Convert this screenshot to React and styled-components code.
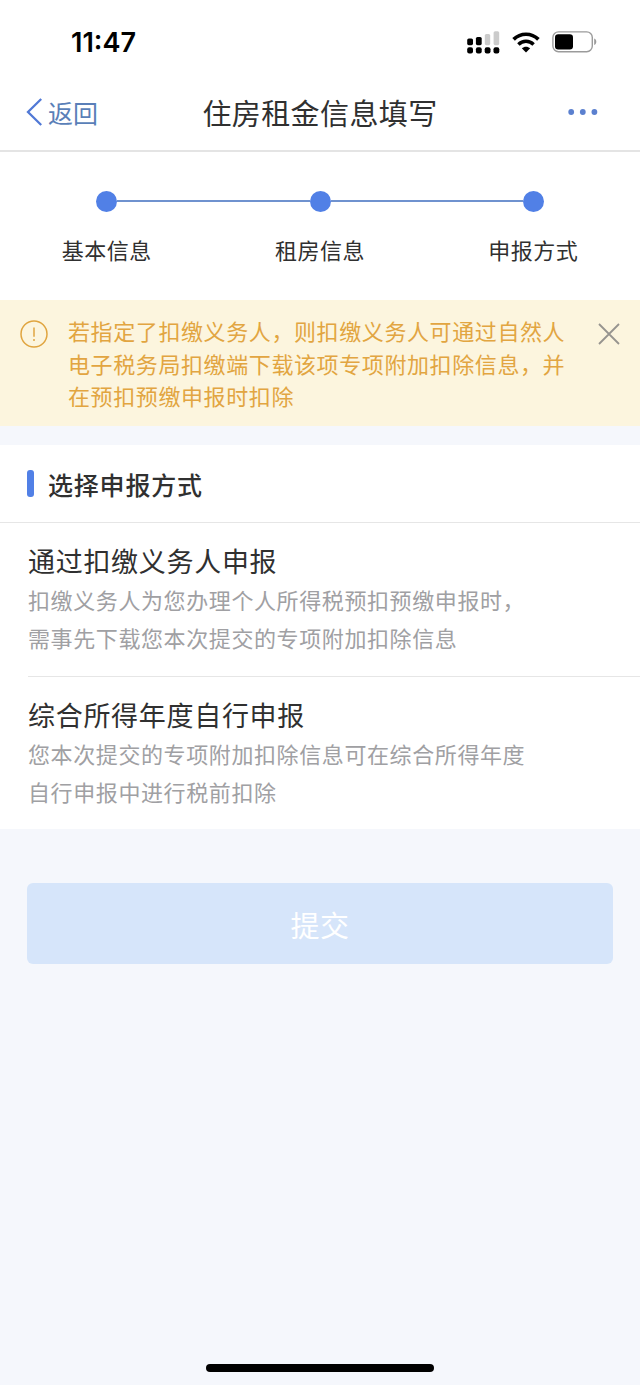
import React from 'react';
import styled, { createGlobalStyle } from 'styled-components';

const steps = ['基本信息', '租房信息', '申报方式'];

const options = [
    {
        title: '通过扣缴义务人申报',
        lines: ['扣缴义务人为您办理个人所得税预扣预缴申报时，', '需事先下载您本次提交的专项附加扣除信息']
    },
    {
        title: '综合所得年度自行申报',
        lines: ['您本次提交的专项附加扣除信息可在综合所得年度', '自行申报中进行税前扣除']
    }
];

const notice = ['若指定了扣缴义务人，则扣缴义务人可通过自然人', '电子税务局扣缴端下载该项专项附加扣除信息，并', '在预扣预缴申报时扣除'];

const SignalIcon = () => (
    <svg width="33" height="24" viewBox="0 0 33 24">
        <rect x="0.2" y="8.4" width="5.8" height="6.8" rx="1.6" fill="#000" />
        <rect x="8.9" y="7" width="5.8" height="8.2" rx="1.6" fill="#000" />
        <rect x="17.8" y="4" width="5.4" height="11.2" rx="1.6" fill="#cbcbcb" />
        <rect x="26.6" y="1.2" width="5.6" height="14" rx="1.6" fill="#cbcbcb" />
        <rect x="0.2" y="17.2" width="5.8" height="6.4" rx="2" fill="#000" />
        <rect x="8.9" y="17.2" width="5.8" height="6.4" rx="2" fill="#000" />
        <rect x="17.7" y="17.2" width="5.8" height="6.4" rx="2" fill="#000" />
        <rect x="26.5" y="17.2" width="5.8" height="6.4" rx="2" fill="#000" />
    </svg>
);

const WifiIcon = () => (
    <svg width="28" height="21" viewBox="0 0 28 21">
        <path d="M1.6 7.4C8.6 0.5 19.4 0.5 26.4 7.4" fill="none" stroke="#000" strokeWidth="3.7" />
        <path d="M6.4 12.4C10.7 8.3 17.3 8.3 21.6 12.4" fill="none" stroke="#000" strokeWidth="3.5" />
        <path d="M14 20.6L9.8 16.3C12.2 14.2 15.8 14.2 18.2 16.3Z" fill="#000" />
    </svg>
);

const BatteryIcon = () => (
    <svg width="45" height="22" viewBox="0 0 45 22">
        <rect x="0.9" y="0.9" width="39.4" height="19.8" rx="5.6" fill="none" stroke="#9b9b9b" strokeWidth="1.4" />
        <rect x="3" y="3.2" width="18" height="15.2" rx="3.2" fill="#000" />
        <path d="M42.2 7.6C45 8.4 45 13.2 42.2 14Z" fill="#9b9b9b" />
    </svg>
);

const BackIcon = () => (
    <svg width="17" height="28" viewBox="0 0 17 28">
        <path d="M15.2 1L2 14L15.2 27" fill="none" stroke="#5179d6" strokeWidth="2.3" />
    </svg>
);

const MoreIcon = () => (
    <svg width="30" height="8" viewBox="0 0 30 8">
        <circle cx="3.2" cy="4" r="2.9" fill="#5b80cf" />
        <circle cx="14.8" cy="4" r="2.9" fill="#5b80cf" />
        <circle cx="26.4" cy="4" r="2.9" fill="#5b80cf" />
    </svg>
);

const WarnIcon = () => (
    <svg width="28" height="28" viewBox="0 0 28 28">
        <circle cx="14" cy="14" r="13" fill="none" stroke="#e0a540" strokeWidth="1.5" />
        <path d="M14 7.6V16.8" stroke="#e0a540" strokeWidth="1.5" />
        <circle cx="14" cy="20" r="1" fill="#e0a540" />
    </svg>
);

const CloseIcon = () => (
    <svg width="22" height="22" viewBox="0 0 22 22">
        <path d="M1 1L21 21M21 1L1 21" fill="none" stroke="#96948f" strokeWidth="1.8" />
    </svg>
);

class App extends React.Component {
    render() {
        return (
            <Page>
                <GlobalStyle />
                <StatusBar>
                    <Time>11:47</Time>
                    <StatusIcons>
                        <SignalIcon />
                        <WifiIcon />
                        <BatteryIcon />
                    </StatusIcons>
                </StatusBar>
                <NavBar>
                    <Back><BackIcon />返回</Back>
                    <NavTitle>住房租金信息填写</NavTitle>
                    <More><MoreIcon /></More>
                </NavBar>
                <Stepper>
                    {steps.map((step) => (
                        <Step key={step}>
                            <Track>
                                <Line />
                                <Dot />
                                <Line />
                            </Track>
                            <StepLabel>{step}</StepLabel>
                        </Step>
                    ))}
                </Stepper>
                <Notice>
                    <WarnIcon />
                    <NoticeText>
                        {notice.map((line) => <div key={line}>{line}</div>)}
                    </NoticeText>
                    <CloseIcon />
                </Notice>
                <Panel>
                    <PanelHeader>
                        <Marker />
                        <PanelTitle>选择申报方式</PanelTitle>
                    </PanelHeader>
                    {options.map((option) => (
                        <Option key={option.title}>
                            <OptionTitle>{option.title}</OptionTitle>
                            {option.lines.map((line) => <OptionText key={line}>{line}</OptionText>)}
                        </Option>
                    ))}
                </Panel>
                <Submit disabled>提交</Submit>
                <HomeIndicator />
            </Page>
        );
    }
}

export default App;

const GlobalStyle = createGlobalStyle`
* {
    box-sizing: border-box;
}
body {
    margin: 0;
    background-color: #f5f7fc;
}
svg {
    display: block;
    flex-shrink: 0;
}
`;

const Page = styled.div`
display: flex;
flex-direction: column;
width: 640px;
height: 1385px;
background-color: #f5f7fc;
font-family: 'Noto Sans CJK SC', sans-serif;
color: #303030;
white-space: nowrap;
`;

const StatusBar = styled.div`
display: flex;
justify-content: space-between;
height: 74px;
padding: 30px 43px 0 71px;
background-color: #fff;
`;

const Time = styled.div`
font-family: Inter, sans-serif;
font-size: 27px;
font-weight: 600;
line-height: 25px;
color: #000;
`;

const StatusIcons = styled.div`
display: flex;
align-items: center;
gap: 12px;
height: 24px;
`;

const NavBar = styled.div`
display: grid;
grid-template-columns: 1fr auto 1fr;
align-items: center;
height: 78px;
padding: 0 42px 0 26px;
border-bottom: 2px solid #e4e4e4;
background-color: #fff;
`;

const Back = styled.div`
display: flex;
align-items: center;
gap: 5px;
font-size: 25px;
line-height: 36px;
color: #5a7fb8;
`;

const NavTitle = styled.div`
padding-left: 16px;
font-size: 29px;
letter-spacing: 0.4px;
line-height: 40px;
`;

const More = styled.div`
justify-self: end;
`;

const Stepper = styled.div`
display: flex;
height: 148px;
padding-top: 38px;
background-color: #fff;
`;

const Step = styled.div`
flex: 1;
`;

const Line = styled.div`
flex: 1;
height: 2px;
background-color: #6f92cf;
`;

const Track = styled.div`
display: flex;
align-items: center;
height: 22px;
${Step}:first-child & ${Line}:first-child,
${Step}:last-child & ${Line}:last-child {
    visibility: hidden;
}
`;

const Dot = styled.div`
width: 21px;
height: 21px;
border-radius: 50%;
background-color: #5180e6;
`;

const StepLabel = styled.div`
margin-top: 20px;
font-size: 22px;
letter-spacing: 0.5px;
line-height: 34px;
text-align: center;
`;

const Notice = styled.div`
display: flex;
height: 126px;
padding: 14px 20px 0;
background-color: #fcf5de;
color: #e2a541;
svg {
    margin-top: 6px;
}
svg:last-child {
    margin-top: 9px;
}
`;

const NoticeText = styled.div`
flex: 1;
padding-left: 20px;
font-size: 22px;
letter-spacing: 0.6px;
line-height: 32.5px;
`;

const Panel = styled.div`
margin-top: 19px;
background-color: #fff;
`;

const PanelHeader = styled.div`
display: flex;
align-items: center;
gap: 14px;
height: 78px;
padding-left: 27px;
border-bottom: 1px solid #e6e6e6;
`;

const Marker = styled.div`
width: 7px;
height: 27px;
border-radius: 3px;
background-color: #5180e6;
`;

const PanelTitle = styled.div`
font-size: 25px;
font-weight: 500;
letter-spacing: 0.8px;
line-height: 36px;
`;

const Option = styled.div`
height: 153px;
margin-left: 28px;
padding-top: 18px;
& + & {
    border-top: 1px solid #e6e6e6;
}
`;

const OptionTitle = styled.div`
font-size: 27px;
letter-spacing: 0.7px;
line-height: 40px;
`;

const OptionText = styled.div`
font-size: 22px;
letter-spacing: 0.6px;
line-height: 37.5px;
color: #a0a0a3;
`;

const Submit = styled.button`
height: 81px;
margin: 54px 27px 0;
border: none;
border-radius: 6px;
background-color: #d6e5fa;
font-family: inherit;
font-size: 29px;
letter-spacing: 0.4px;
color: #fff;
`;

const HomeIndicator = styled.div`
width: 228px;
height: 8px;
margin: auto auto 13px;
border-radius: 4px;
background-color: #000;
`;
